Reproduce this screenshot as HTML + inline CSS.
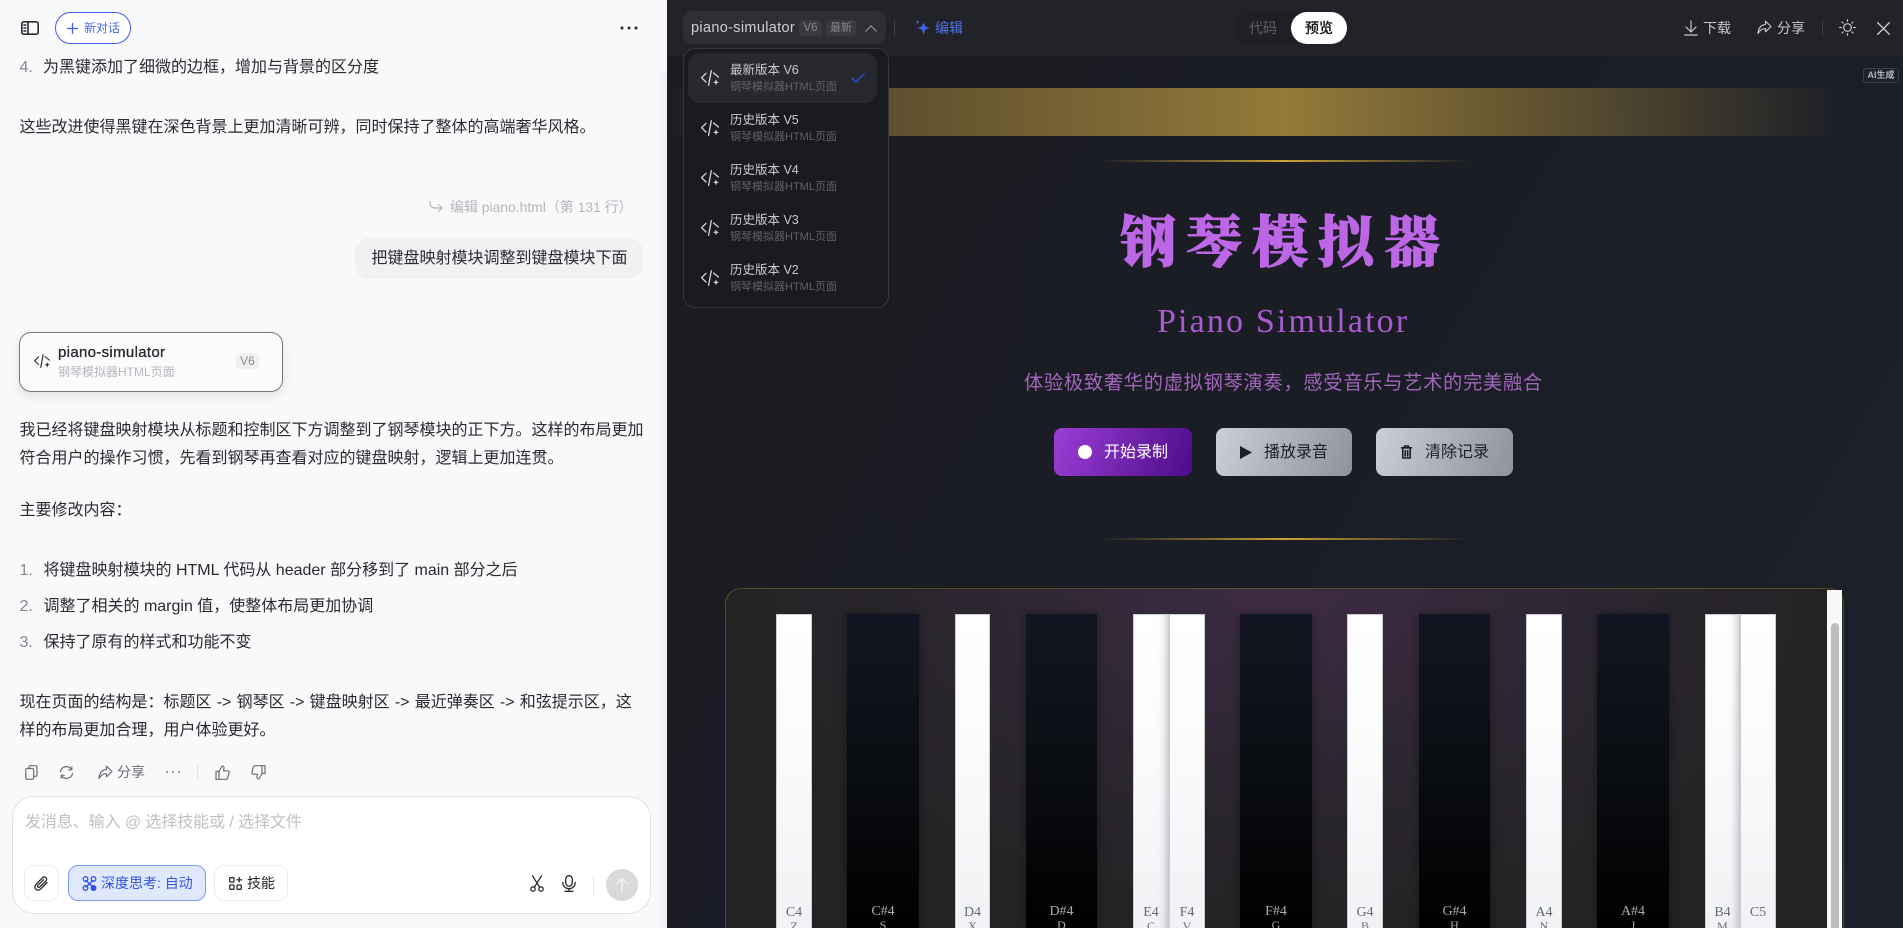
<!DOCTYPE html>
<html lang="zh">
<head>
<meta charset="utf-8">
<title>piano-simulator</title>
<style>
html,body{margin:0;padding:0;width:1903px;height:928px;overflow:hidden;background:#f8f9fb}
*{box-sizing:border-box}
body{font-family:"Liberation Sans","Noto Sans CJK SC",sans-serif;position:relative}
#root{position:absolute;left:0;top:0;width:1903px;height:928px;overflow:hidden}
.a{position:absolute;white-space:nowrap}
svg{position:absolute;overflow:visible;fill:none;stroke:currentColor;stroke-linecap:round;stroke-linejoin:round}
.t{font-size:16px;line-height:28px;height:28px;color:#2a2b2f}
.n{color:#85878c}
#left{position:absolute;left:0;top:0;width:667px;height:928px;background:#f8f9fb;overflow:hidden}
#edge{position:absolute;left:657px;top:72px;width:10px;height:856px;background:linear-gradient(90deg,rgba(0,0,0,0),rgba(0,0,0,.04))}
.k{position:absolute;top:614px;height:314px;text-align:center;overflow:hidden;font-family:"Liberation Serif","Noto Serif CJK SC",serif}
.w{background:linear-gradient(180deg,#fff 0%,#fbfbfc 40%,#f1f2f5 100%);border:1px solid #c9ccd3;border-bottom:0;color:#666b75}
.b{background:linear-gradient(180deg,#111622 0%,#0b0e13 45%,#000 100%);color:#a9acb3;box-shadow:0 0 8px rgba(0,0,0,.35)}
.k i{position:absolute;left:0;right:0;font-style:normal;white-space:nowrap;text-align:center}
.k .l{top:289px;font-size:14px;line-height:18px}
.k .m{top:304px;font-size:12px;line-height:14px}
.it{font-size:12.5px;line-height:16px;color:#c9cacd;left:730px}
.is{font-size:11px;line-height:14px;color:#5f6065;left:730px}
.btn{position:absolute;top:428px;height:48px;border-radius:8px}
</style>
</head>
<body>
<svg width="0" height="0" style="position:absolute">
<defs>
<symbol id="code" viewBox="0 0 18 16">
<path d="M5 3.300.6 7.700 5 12M10.300.7 7.600 15.300M12.600 3l4.800 4" fill="none" stroke="currentColor" stroke-width="1.300" stroke-linecap="round" stroke-linejoin="round"/>
<path d="M15 9.200l.8 2.300 2.200.8-2.200.8-.8 2.300-.8-2.300-2.200-.8 2.200-.8z" fill="currentColor" stroke="none"/>
</symbol>
</defs>
</svg>
<div id="root">
<div id="left">
  <svg style="left:21px;top:21px;color:#2a2b2f" width="18" height="14" viewBox="0 0 18 14" stroke-width="1.600"><rect x=".8" y=".8" width="16.400" height="12.400" rx="2"/><path d="M7 1v12M3 4h1.600M3 7h1.600M3 10h1.600"/></svg>
  <div class="a" style="left:55px;top:12px;width:76px;height:32px;border:1px solid #3f5ff0;border-radius:16px;background:#fff"></div>
  <svg style="left:67px;top:23px;color:#3f5ff0" width="11" height="11" viewBox="0 0 11 11" stroke-width="1.300"><path d="M5.500 .5v10M.5 5.500h10"/></svg>
  <div class="a" style="left:84px;top:19px;font-size:12px;line-height:18px;color:#4a69f0">新对话</div>
  <svg style="left:620px;top:26px;stroke:none" width="18" height="4" viewBox="0 0 18 4"><circle cx="2" cy="2" r="1.500" fill="#2a2b2f"/><circle cx="9" cy="2" r="1.500" fill="#2a2b2f"/><circle cx="16" cy="2" r="1.500" fill="#2a2b2f"/></svg>

  <div class="a t n" style="left:19.500px;top:54px">4.</div>
  <div class="a t" style="left:43px;top:54px">为黑键添加了细微的边框，增加与背景的区分度</div>
  <div class="a t" style="left:19.500px;top:114px">这些改进使得黑键在深色背景上更加清晰可辨，同时保持了整体的高端奢华风格。</div>

  <svg style="left:429px;top:201px;color:#b5b6ba" width="14" height="13" viewBox="0 0 14 13" stroke-width="1.200"><path d="M1 1c0 4 2 6 5 6h7M9.500 3.500 13 7l-3.500 3.500"/></svg>
  <div class="a" style="left:450px;top:197px;font-size:14px;line-height:20px;letter-spacing:-.05px;color:#b6b7bb">编辑 piano.html（第 131 行）</div>

  <div class="a" style="left:355px;top:238px;width:288px;height:41px;border-radius:14px;background:#f0f1f3"></div>
  <div class="a" style="left:371.500px;top:245px;font-size:16px;line-height:28px;color:#2a2b2f">把键盘映射模块调整到键盘模块下面</div>

  <div class="a" style="left:19px;top:332px;width:264px;height:60px;border:1px solid #77787c;border-radius:12px;background:#fafbfc;box-shadow:0 4px 10px rgba(0,0,0,.1)"></div>
  <svg style="left:34px;top:354px;color:#2a2b2f" width="16" height="14"><use href="#code"/></svg>
  <div class="a" style="left:58px;top:344px;font-size:15px;line-height:18px;letter-spacing:.32px;color:#26272b;-webkit-text-stroke:.3px #26272b">piano-simulator</div>
  <div class="a" style="left:58px;top:364px;font-size:12px;line-height:16px;color:#b6b7bb">钢琴模拟器HTML页面</div>
  <div class="a" style="left:236px;top:353px;width:23px;height:16px;border-radius:4px;background:#eff0f2;font-size:12px;line-height:16px;text-align:center;color:#8b8c91">V6</div>

  <div class="a t" style="left:19.500px;top:417px">我已经将键盘映射模块从标题和控制区下方调整到了钢琴模块的正下方。这样的布局更加</div>
  <div class="a t" style="left:19.500px;top:445px">符合用户的操作习惯，先看到钢琴再查看对应的键盘映射，逻辑上更加连贯。</div>
  <div class="a t" style="left:19.500px;top:497px">主要修改内容：</div>
  <div class="a t n" style="left:19.500px;top:557px">1.</div>
  <div class="a t" style="left:43.500px;top:557px">将键盘映射模块的 HTML 代码从 header 部分移到了 main 部分之后</div>
  <div class="a t n" style="left:19.500px;top:593px">2.</div>
  <div class="a t" style="left:43.500px;top:593px">调整了相关的 margin 值，使整体布局更加协调</div>
  <div class="a t n" style="left:19.500px;top:629px">3.</div>
  <div class="a t" style="left:43.500px;top:629px">保持了原有的样式和功能不变</div>
  <div class="a t" style="left:19.500px;top:689px;word-spacing:.75px">现在页面的结构是：标题区 -&gt; 钢琴区 -&gt; 键盘映射区 -&gt; 最近弹奏区 -&gt; 和弦提示区，这</div>
  <div class="a t" style="left:19.500px;top:717px">样的布局更加合理，用户体验更好。</div>

  <svg style="left:25px;top:765px;color:#6c6d72" width="13" height="15" viewBox="0 0 13 15" stroke-width="1.200"><rect x=".7" y="3.500" width="8" height="10.800" rx="1.500"/><path d="M4 3.500V2a1.300 1.300 0 0 1 1.300-1.300h5.400A1.300 1.300 0 0 1 12 2v8a1.300 1.300 0 0 1-1.300 1.300H8.700"/></svg>
  <svg style="left:59px;top:765px;color:#6c6d72" width="15" height="15" viewBox="0 0 15 15" stroke-width="1.200"><path d="M1.500 6.500A6 6 0 0 1 12.500 4.500M13.500 8.500A6 6 0 0 1 2.500 10.500"/><path d="M12.800 1.800v3h-3M2.200 13.200v-3h3"/></svg>
  <svg style="left:98px;top:765px;color:#6c6d72" width="15" height="15" viewBox="0 0 15 15" stroke-width="1.200"><path d="M8.500 1.200 14 6.500l-5.500 5.300V8.700C5 8.500 3 10 1 13.500 1.300 8.500 3.500 5 8.500 4.400z"/></svg>
  <div class="a" style="left:117px;top:762px;font-size:14px;line-height:20px;color:#6c6d72">分享</div>
  <svg style="left:166px;top:771px;stroke:none" width="14" height="2" viewBox="0 0 14 2"><circle cx="1" cy="1" r="1" fill="#85868a"/><circle cx="7" cy="1" r="1" fill="#85868a"/><circle cx="13" cy="1" r="1" fill="#85868a"/></svg>
  <div class="a" style="left:197px;top:765px;width:1px;height:14px;background:#e0e1e4"></div>
  <svg style="left:215px;top:765px;color:#6c6d72" width="15" height="15" viewBox="0 0 15 15" stroke-width="1.200"><path d="M1 6.500h3v7.800H1zM4 6.500 7 1c1.500 0 2.300 1 2 2.500L8.500 5.800h4.300c1 0 1.600 1 1.300 2l-1.500 5.300c-.2.700-.8 1.200-1.500 1.200H4"/></svg>
  <svg style="left:251px;top:765px;color:#6c6d72" width="15" height="15" viewBox="0 0 15 15" stroke-width="1.200"><path d="M14 8.500h-3V.7h3zM11 8.500 8 14c-1.500 0-2.300-1-2-2.500L6.500 9.200H2.200c-1 0-1.600-1-1.300-2L2.400 1.900C2.600 1.200 3.200.7 3.900.7H11"/></svg>

  <div class="a" style="left:12px;top:796px;width:639px;height:118px;border:1px solid #dfe0e3;border-radius:22px;background:#fff"></div>
  <div class="a" style="left:25px;top:812px;font-size:16px;line-height:22px;letter-spacing:-.08px;color:#bfc0c4">发消息、输入 @ 选择技能或 / 选择文件</div>
  <div class="a" style="left:24px;top:865px;width:35px;height:36px;border:1px solid #ececee;border-radius:10px;background:#fff"></div>
  <svg style="left:34px;top:876px;color:#2a2b2f" width="15" height="15" viewBox="0 0 15 15" stroke-width="1.300"><path d="M13 6.500 7 12.800c-1.700 1.700-4 1.700-5.200.4S.6 9.700 2.300 8L8.500 1.700c1-1 2.600-1 3.500-.1s.9 2.400-.1 3.400L5.800 11c-.6.600-1.400.6-1.900.1s-.5-1.300.1-1.900l5.500-5.500"/></svg>
  <div class="a" style="left:68px;top:865px;width:138px;height:36px;border:1px solid #7c9cf6;border-radius:10px;background:#dfe8fd"></div>
  <svg style="left:82px;top:876px;color:#2f52e8" width="15" height="15" viewBox="0 0 15 15" stroke-width="1.300"><path d="M4 4.500 11 11M11 4.500 4 11"/><circle cx="3.500" cy="3" r="2.300"/><circle cx="11.500" cy="3" r="2.300"/><circle cx="3.500" cy="12" r="2.300"/><circle cx="11.500" cy="12" r="2.300" fill="#2f52e8"/></svg>
  <div class="a" style="left:101px;top:873px;font-size:14px;line-height:20px;color:#3354e6">深度思考: 自动</div>
  <div class="a" style="left:214px;top:865px;width:74px;height:36px;border:1px solid #ececee;border-radius:10px;background:#fff"></div>
  <svg style="left:229px;top:877px;color:#2a2b2f" width="13" height="13" viewBox="0 0 13 13" stroke-width="1.300"><rect x=".7" y=".7" width="4.300" height="4.300" rx=".8"/><rect x=".7" y="8" width="4.300" height="4.300" rx=".8"/><rect x="8" y="8" width="4.300" height="4.300" rx=".8"/><path d="M10.200 .5v4.500M8 2.800h4.500"/></svg>
  <div class="a" style="left:247px;top:873px;font-size:14px;line-height:20px;color:#26272b">技能</div>
  <svg style="left:530px;top:875px;color:#2a2b2f" width="14" height="17" viewBox="0 0 14 17" stroke-width="1.300"><path d="M2.500 .8 9.500 12M11.500 .8 4.500 12"/><circle cx="3" cy="14" r="2.200"/><circle cx="11" cy="14" r="2.200"/></svg>
  <svg style="left:562px;top:875px;color:#2a2b2f" width="14" height="17" viewBox="0 0 14 17" stroke-width="1.300"><rect x="3.700" y=".7" width="6.600" height="10.500" rx="3.300"/><path d="M.8 7.500a6.200 6.200 0 0 0 12.400 0M7 13.700v2.600M3 16.300h8"/></svg>
  <div class="a" style="left:593px;top:876px;width:1px;height:19px;background:#e6e7e9"></div>
  <div class="a" style="left:606px;top:869px;width:32px;height:32px;border-radius:50%;background:#d9d9da"></div>
  <svg style="left:616px;top:877px;color:#f1f1f2" width="12" height="16" viewBox="0 0 12 16" stroke-width="1.400"><path d="M6 15V1.500M1 6.500l5-5 5 5"/></svg>
  <div id="edge"></div>
</div>

<div class="a" style="left:667px;top:56px;width:1236px;height:872px;background:linear-gradient(120deg,#1c1d22 0%,#1b1d25 50%,#1c212b 100%)"></div>
<div class="a" style="left:667px;top:88px;width:1236px;height:48px;background:linear-gradient(90deg,rgba(147,122,57,0) 0%,rgba(147,122,57,.55) 18%,#937a39 50%,rgba(147,122,57,.5) 74%,rgba(147,122,57,.1) 91%,rgba(147,122,57,0) 95%)"></div>
<div class="a" style="left:1100px;top:160px;width:370px;height:2px;background:linear-gradient(90deg,rgba(201,163,58,0),#c9a33a 50%,rgba(201,163,58,0))"></div>
<div class="a" style="left:1100px;top:538px;width:370px;height:2px;background:linear-gradient(90deg,rgba(201,163,58,0),#c9a33a 50%,rgba(201,163,58,0))"></div>

<div class="a" style="left:667px;top:0;width:1236px;height:56px;background:#222328"></div>

<!-- top bar -->
<div class="a" style="left:683px;top:11px;width:203px;height:33px;border-radius:10px;background:#2e2f34"></div>
<div class="a" style="left:691px;top:18px;font-size:14.500px;line-height:20px;letter-spacing:.33px;color:#cfd0d3">piano-simulator</div>
<div class="a" style="left:799px;top:20px;width:23px;height:16px;border-radius:4px;background:#3a3b40;font-size:11.500px;line-height:16px;text-align:center;color:#85868b">V6</div>
<div class="a" style="left:826px;top:20px;width:30px;height:16px;border-radius:4px;background:#3a3b40;font-size:11px;line-height:16px;text-align:center;color:#85868b">最新</div>
<svg style="left:865px;top:25px;color:#8a8b90" width="12" height="7" viewBox="0 0 12 7" stroke-width="1.200"><path d="M.7 6.300 6 .8l5.300 5.500"/></svg>
<div class="a" style="left:894px;top:20px;width:1px;height:16px;background:#424348"></div>
<svg style="left:915px;top:20px;stroke:none" width="15" height="15" viewBox="0 0 15 15"><path d="M8.500 2.500l1.700 4L14.500 8l-4.300 1.500-1.700 5-1.700-5L2.500 8l4.300-1.500z" fill="#3d62f0"/><path d="M2.500 0l.6 1.400L4.500 2l-1.400.6L2.500 4l-.6-1.400L.5 2l1.400-.6z" fill="#3d62f0"/></svg>
<div class="a" style="left:935px;top:18px;font-size:14px;line-height:20px;color:#4f72ea">编辑</div>

<div class="a" style="left:1235px;top:12px;width:112px;height:32px;border-radius:16px;background:#1f2024"></div>
<div class="a" style="left:1249px;top:18px;font-size:14px;line-height:20px;color:#5f6065">代码</div>
<div class="a" style="left:1291px;top:12px;width:56px;height:32px;border-radius:16px;background:#fff"></div>
<div class="a" style="left:1305px;top:18px;font-size:14px;line-height:20px;color:#1a1b1f;font-weight:500;-webkit-text-stroke:.2px #1a1b1f">预览</div>

<svg style="left:1684px;top:20px;color:#c7c8cb" width="14" height="16" viewBox="0 0 14 16" stroke-width="1.200"><path d="M7 .8v11M2 7l5 5 5-5M.7 15h12.600"/></svg>
<div class="a" style="left:1703px;top:18px;font-size:14px;line-height:20px;color:#c7c8cb">下载</div>
<svg style="left:1756px;top:20px;color:#c7c8cb" width="17" height="15" viewBox="0 0 15 15" stroke-width="1.150"><path d="M8.500 1.200 14 6.500l-5.500 5.300V8.700C5 8.500 3 10 1 13.500 1.300 8.500 3.500 5 8.500 4.400z"/></svg>
<div class="a" style="left:1777px;top:18px;font-size:14px;line-height:20px;color:#c7c8cb">分享</div>
<div class="a" style="left:1822px;top:20px;width:1px;height:16px;background:#3b3c41"></div>
<svg style="left:1839px;top:19px;color:#c7c8cb" width="17" height="17" viewBox="0 0 17 17" stroke-width="1.200"><circle cx="8.500" cy="8.500" r="3.800"/><path d="M8.500 .7v1.600M8.500 14.700v1.600M.7 8.500h1.600M14.700 8.500h1.600M3 3l1.100 1.100M12.900 12.900 14 14M3 14l1.100-1.100M12.900 4.100 14 3"/></svg>
<svg style="left:1877px;top:22px;color:#d5d6d9" width="13" height="13" viewBox="0 0 13 13" stroke-width="1.300"><path d="M.7 .7l11.600 11.600M12.300 .7 .7 12.300"/></svg>

<!-- AI tag -->
<div class="a" style="left:1863px;top:68px;width:36px;height:15px;border:1px solid #3a3f4b;border-radius:3px;background:#1d212a;font-size:9px;line-height:13px;text-align:center;color:#b5b8bf;font-weight:700">AI生成</div>

<!-- hero -->
<div class="a" style="left:1120px;top:200px;width:340px;font-family:'Noto Serif CJK SC',serif;font-weight:900;font-size:56px;line-height:78px;letter-spacing:10px;color:#bd66e6;-webkit-text-stroke:1px #bd66e6">钢琴模拟器</div>
<div class="a" style="left:1157px;top:302px;font-family:'Liberation Serif',serif;font-size:34px;line-height:40px;letter-spacing:2.150px;color:#aa5bd2">Piano Simulator</div>
<div class="a" style="left:1024px;top:370px;font-size:19.200px;line-height:28px;letter-spacing:.77px;color:#a366bd">体验极致奢华的虚拟钢琴演奏，感受音乐与艺术的完美融合</div>

<div class="btn" style="left:1054px;width:138px;background:linear-gradient(110deg,#9a3ed6,#4d0c88)"></div>
<div class="a" style="left:1078px;top:445px;width:14px;height:14px;border-radius:50%;background:#fff"></div>
<div class="a" style="left:1104px;top:439px;font-size:16px;line-height:28px;color:#fff">开始录制</div>
<div class="btn" style="left:1216px;width:136px;background:linear-gradient(110deg,#cbcfd7,#8d939e)"></div>
<svg style="left:1240px;top:446px;stroke:none" width="12" height="13" viewBox="0 0 12 13"><path d="M0 0l12 6.500L0 13z" fill="#1d1f25"/></svg>
<div class="a" style="left:1264px;top:439px;font-size:16px;line-height:28px;color:#1d1f25">播放录音</div>
<div class="btn" style="left:1376px;width:137px;background:linear-gradient(110deg,#cbcfd7,#8d939e)"></div>
<svg style="left:1401px;top:445px;color:#1d1f25" width="11" height="14" viewBox="0 0 11 14" stroke-width="1.600"><path d="M.5 2.800h10M3.500 2.500V1h4v1.500M1.800 3v10h7.400V3M4.300 5.500V11M6.700 5.500V11"/></svg>
<div class="a" style="left:1425px;top:439px;font-size:16px;line-height:28px;color:#1d1f25">清除记录</div>

<!-- piano -->
<div class="a" style="left:725px;top:588px;width:1119px;height:340px;border:1px solid #5a4a24;border-bottom:0;border-radius:16px 16px 0 0;background:radial-gradient(ellipse 560px 340px at 50% 0,#3e2b44 0%,#2c2631 55%,#232323 100%)"></div>
<div class="a" style="left:1827px;top:590px;width:15px;height:338px;background:#f8f8f9"></div>
<div class="a" style="left:1831px;top:623px;width:8px;height:305px;border-radius:4px 4px 0 0;background:#bcbcbc"></div>

<div class="k w" style="left:776px;width:36px"><i class="l">C4</i><i class="m">Z</i></div>
<div class="k b" style="left:847px;width:72px"><i class="l">C#4</i><i class="m">S</i></div>
<div class="k w" style="left:955px;width:35px"><i class="l">D4</i><i class="m">X</i></div>
<div class="k b" style="left:1026px;width:71px"><i class="l">D#4</i><i class="m">D</i></div>
<div class="k w" style="left:1133px;width:36px;box-shadow:inset -8px 0 8px -6px rgba(80,85,100,.35)"><i class="l">E4</i><i class="m">C</i></div>
<div class="k w" style="left:1169px;width:36px"><i class="l">F4</i><i class="m">V</i></div>
<div class="k b" style="left:1240px;width:72px"><i class="l">F#4</i><i class="m">G</i></div>
<div class="k w" style="left:1347px;width:36px"><i class="l">G4</i><i class="m">B</i></div>
<div class="k b" style="left:1419px;width:71px"><i class="l">G#4</i><i class="m">H</i></div>
<div class="k w" style="left:1526px;width:36px"><i class="l">A4</i><i class="m">N</i></div>
<div class="k b" style="left:1597px;width:72px"><i class="l">A#4</i><i class="m">J</i></div>
<div class="k w" style="left:1705px;width:35px;box-shadow:inset -8px 0 8px -6px rgba(80,85,100,.35)"><i class="l">B4</i><i class="m">M</i></div>
<div class="k w" style="left:1740px;width:36px"><i class="l">C5</i></div>

<!-- dropdown -->
<div class="a" style="left:683px;top:48px;width:206px;height:260px;border:1px solid #36373b;border-radius:12px;background:#1a1b1f"></div>
<div class="a" style="left:688px;top:53px;width:189px;height:50px;border-radius:12px;background:#28292e"></div>
<svg style="left:701px;top:70px;color:#d5d6d9" width="18" height="16"><use href="#code"/></svg>
<div class="a it" style="top:62px">最新版本 V6</div>
<div class="a is" style="top:80px">钢琴模拟器HTML页面</div>
<svg style="left:851px;top:73px;color:#2d4de0" width="14" height="10" viewBox="0 0 14 10" stroke-width="1.300"><path d="M.7 5l4 4L13.300 .8"/></svg>
<svg style="left:701px;top:120px;color:#d5d6d9" width="18" height="16"><use href="#code"/></svg>
<div class="a it" style="top:112px">历史版本 V5</div>
<div class="a is" style="top:130px">钢琴模拟器HTML页面</div>
<svg style="left:701px;top:170px;color:#d5d6d9" width="18" height="16"><use href="#code"/></svg>
<div class="a it" style="top:162px">历史版本 V4</div>
<div class="a is" style="top:180px">钢琴模拟器HTML页面</div>
<svg style="left:701px;top:220px;color:#d5d6d9" width="18" height="16"><use href="#code"/></svg>
<div class="a it" style="top:212px">历史版本 V3</div>
<div class="a is" style="top:230px">钢琴模拟器HTML页面</div>
<svg style="left:701px;top:270px;color:#d5d6d9" width="18" height="16"><use href="#code"/></svg>
<div class="a it" style="top:262px">历史版本 V2</div>
<div class="a is" style="top:280px">钢琴模拟器HTML页面</div>
</div>
</body>
</html>
